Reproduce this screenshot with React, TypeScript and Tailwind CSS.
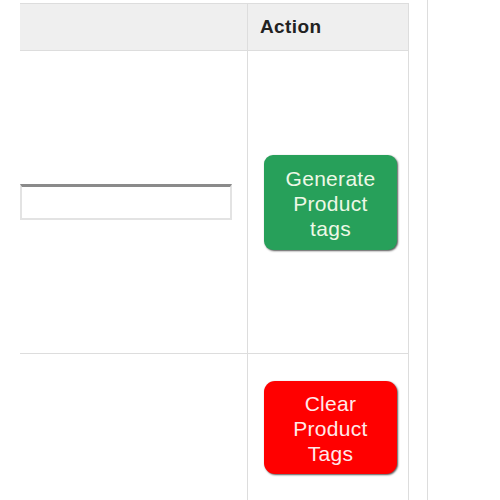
export default function App() {
  return (
    <div className="flex h-[500px] w-[500px] overflow-hidden bg-white font-['Liberation_Sans',Arial,sans-serif]">
      {/* table */}
      <div className="ml-[20px] mt-[3px] flex w-[389px] shrink-0 flex-col border-r border-t border-[#dddddd]">
        {/* header */}
        <div className="flex h-[47px] shrink-0 border-b border-[#dddddd] bg-[#efefef]">
          <div className="w-[227px] shrink-0" />
          <div className="flex flex-1 items-center border-l border-[#dddddd] pl-[12px] text-[19px] font-bold tracking-[0.4px] text-[#222222]">
            Action
          </div>
        </div>

        {/* row 1 */}
        <div className="flex h-[303px] shrink-0 border-b border-[#dddddd]">
          <div className="flex w-[227px] shrink-0 items-center pr-[15px]">
            <input
              type="text"
              className="h-[36px] w-full border-2 border-[#e3e3e3] border-t-[#8a8a8a] border-t-[3px] bg-white outline-none"
            />
          </div>
          <div className="flex flex-1 items-center border-l border-[#dddddd] pl-[16px]">
            <button className="flex h-[95px] w-[133px] flex-col items-center justify-center rounded-[9px] bg-[#27a05a] pt-[3px] text-[21px] leading-[25px] tracking-[0.3px] text-[#eef8e6] shadow-[1px_1px_2px_#555555]">
              <span>Generate</span>
              <span>Product</span>
              <span>tags</span>
            </button>
          </div>
        </div>

        {/* row 2 */}
        <div className="flex h-[146px] shrink-0">
          <div className="w-[227px] shrink-0" />
          <div className="flex flex-1 items-center border-l border-[#dddddd] pl-[16px]">
            <button className="flex h-[93px] w-[133px] flex-col items-center justify-center rounded-[11px] bg-[#ff0000] pt-[3px] text-[21px] leading-[25px] tracking-[0.3px] text-[#ffeaea] shadow-[1px_1px_2px_#555555]">
              <span>Clear</span>
              <span>Product</span>
              <span>Tags</span>
            </button>
          </div>
        </div>
      </div>

      {/* sidebar edge */}
      <div className="ml-[18px] h-full border-l border-[#dddddd]" />
    </div>
  )
}
